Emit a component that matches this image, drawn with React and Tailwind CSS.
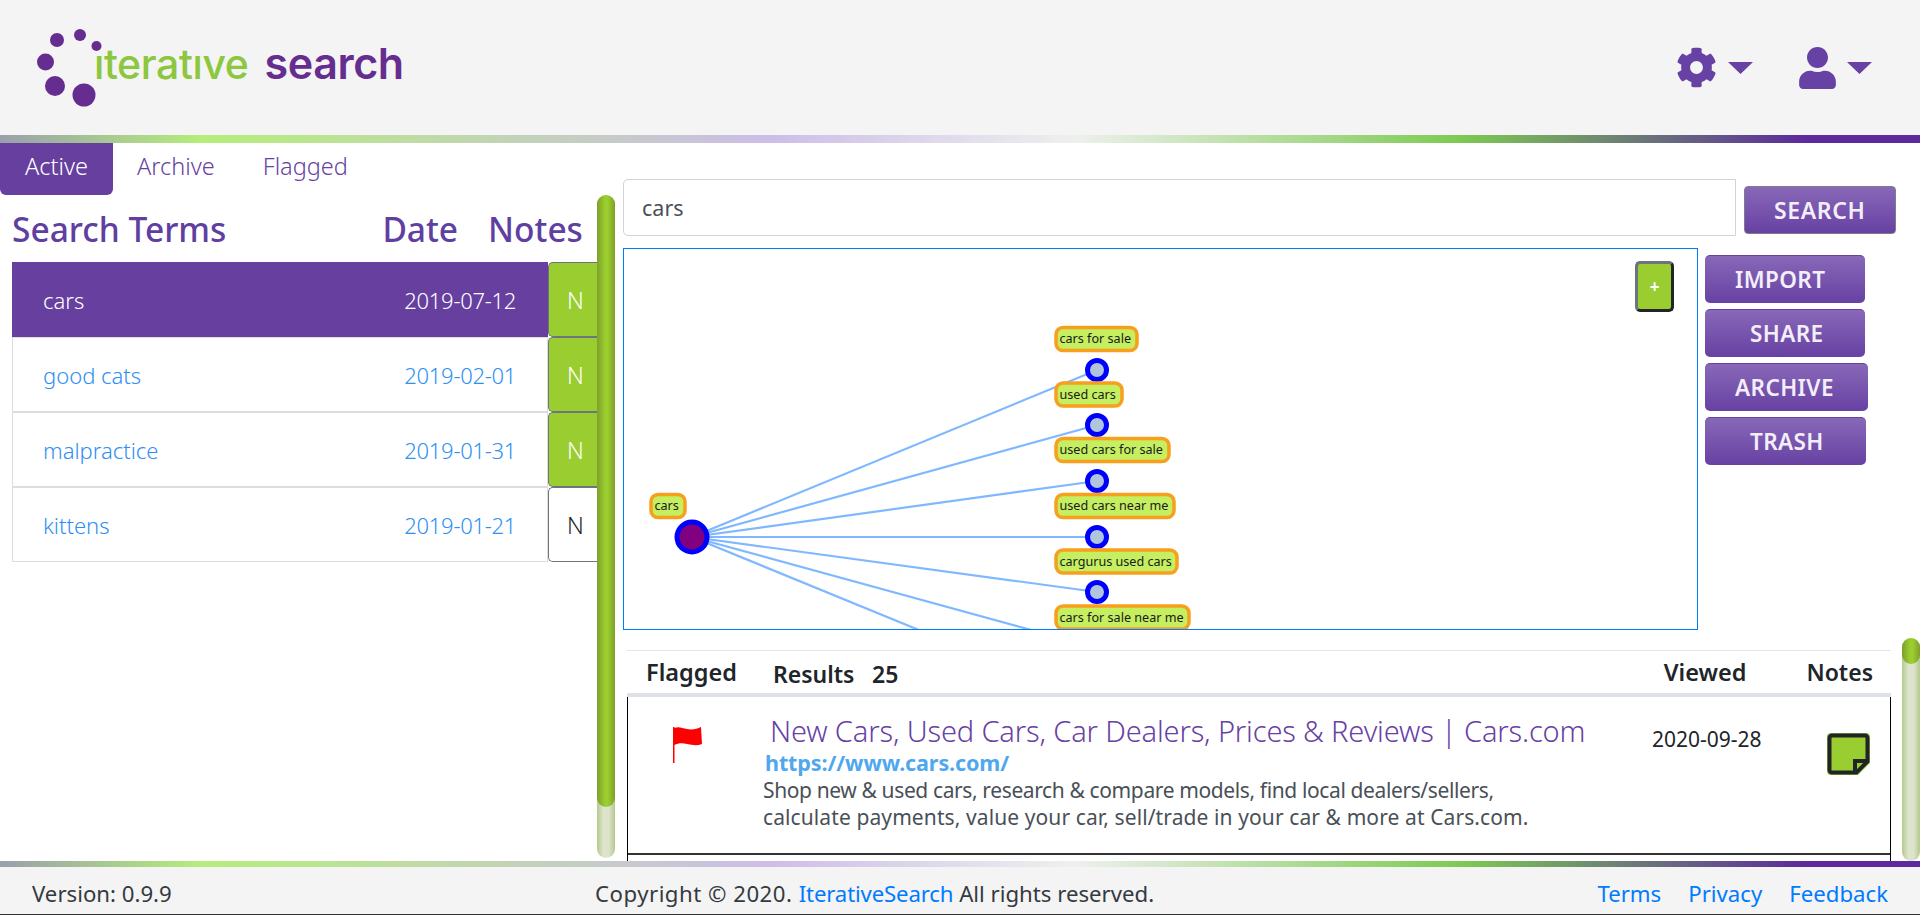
import React from "react";
import { FaCog, FaUser } from "react-icons/fa";

const rows = [
  { term: "cars", date: "2019-07-12", active: true, note: true },
  { term: "good cats", date: "2019-02-01", note: true },
  { term: "malpractice", date: "2019-01-31", note: true },
  { term: "kittens", date: "2019-01-21", note: false },
];

const labels = [
  { t: "cars for sale", x: 432, y: 78.500, w: 81 },
  { t: "used cars", x: 432, y: 134, w: 66 },
  { t: "used cars for sale", x: 432, y: 189.500, w: 113 },
  { t: "used cars near me", x: 432, y: 245.500, w: 118 },
  { t: "cargurus used cars", x: 432, y: 301, w: 121 },
  { t: "cars for sale near me", x: 432, y: 357, w: 133 },
  { t: "cars", x: 27, y: 245.500, w: 34 },
];

const kids = [121, 176, 232, 288, 343, 399, 454];

function Caret() {
  return (
    <svg width="25" height="12" viewBox="0 0 25 12" className="fill-[#6741a3]">
      <polygon points="0,0 25,0 12.5,12" />
    </svg>
  );
}

function Bar({ h }) {
  return <div className={"w-full shrink-0 bg-[linear-gradient(to_right,#9aa0ac_0%,#b5ee7a_10.6%,#cdbde8_40%,#eef0ee_56%,#7ccb50_76%,#5c2a9d_94%)] " + h} />;
}

function Scroll({ outer, thumb }) {
  return (
    <div className={"w-[18px] shrink-0 rounded-[9px] bg-[linear-gradient(to_right,#b4c98e,#dde4cc_35%,#dde4cc_65%,#b4c98e)] " + outer}>
      <div className={"w-full rounded-[9px] bg-[linear-gradient(to_right,#7f9f2a,#9acd2f_45%,#9acd2f_60%,#7f9f2a)] " + thumb} />
    </div>
  );
}

function SideBtn({ label, w, pl }) {
  return (
    <div className={"h-[48px] flex items-center pt-[1px] rounded-[5px] bg-[linear-gradient(to_bottom,#8868b8,#6741a3)] border-t border-[#6741a3] text-[#f3eefa] text-[22.500px] leading-none font-semibold tracking-[0.4px] " + w + " " + pl}>
      {label}
    </div>
  );
}

export default function App() {
  return (
    <div className="w-[1920px] h-[915px] flex flex-col overflow-hidden bg-white font-['Noto_Sans','Open_Sans',sans-serif] text-[#212529]">
      <header className="h-[135px] shrink-0 bg-[#f4f4f4] flex items-center">
        <div className="relative w-[420px] h-[135px]">
          <svg width="110" height="110" viewBox="0 0 110 110" className="absolute left-0 top-0 fill-[#662d91]">
            <circle cx="57" cy="40" r="7" />
            <circle cx="80" cy="35" r="6" />
            <circle cx="96.500" cy="46" r="5" />
            <circle cx="45.500" cy="62" r="8.500" />
            <circle cx="55" cy="86" r="10" />
            <circle cx="84" cy="95" r="11.500" />
          </svg>
          <div className="absolute left-[94px] top-[38px] text-[41px] leading-[50px] font-['Inter',sans-serif] font-medium whitespace-nowrap tracking-[-0.4px]">
            <span className="text-[#8dc63f]">ıteratıve</span>
            <span className="ml-[16px] text-[43px] text-[#662d91] font-semibold">search</span>
          </div>
        </div>
        <div className="ml-auto flex items-center text-[#6741a3]">
          <FaCog className="w-[41px] h-[41px]" />
          <div className="ml-[11px]"><Caret /></div>
          <FaUser className="ml-[46px] w-[37px] h-[42px]" />
          <div className="ml-[11px] mr-[48px]"><Caret /></div>
        </div>
      </header>
      <Bar h="h-[8px]" />

      <main className="h-[718px] shrink-0 flex overflow-hidden">
        <section className="w-[597px] shrink-0 flex flex-col">
          <nav className="h-[52px] flex items-stretch text-[23.500px] font-light text-[#6741a3]">
            <div className="w-[113px] pb-[4px] bg-[#663f9f] text-white rounded-b-[6px] flex items-center justify-center">Active</div>
            <div className="ml-[24px] pb-[4px] flex items-center">Archive</div>
            <div className="ml-[48px] pb-[4px] flex items-center">Flagged</div>
          </nav>
          <div className="h-[67px] pl-[12px] pt-[2px] flex items-center text-[33.500px] font-medium text-[#5f3f9f]">
            <span>Search Terms</span>
            <span className="ml-[156px]">Date</span>
            <span className="ml-[30px]">Notes</span>
          </div>
          <div className="flex flex-col">
            {rows.map((r) => (
              <div key={r.term} className="h-[75px] flex items-stretch">
                <div className={"ml-[12px] w-[536px] flex items-center justify-between pl-[30px] pr-[31px] pt-[1px] text-[22px] font-light border " + (r.active ? "bg-[#663f9f] text-white border-[#663f9f]" : "bg-white text-[#2f8ff5] border-[#dddddd]")}>
                  <span>{r.term}</span>
                  <span className="tracking-[-0.3px]">{r.date}</span>
                </div>
                <div className={"flex-1 rounded-l-[5px] border border-r-0 flex items-center justify-center text-[23px] font-light pl-[5px] pt-[1px] border-[#6c757d] " + (r.note ? "bg-[#9acd2f] text-white" : "bg-white text-[#212529]")}>
                  N
                </div>
              </div>
            ))}
          </div>
        </section>

        <Scroll outer="mt-[52px] h-[663px]" thumb="h-[612px]" />

        <section className="w-[1287px] shrink-0 pl-[8px] pt-[36px] flex flex-col">
          <div className="flex items-end h-[57px]">
            <div className="w-[1113px] h-[57px] pt-[1px] rounded-l-[5px] border border-[#ced4da] flex items-center pl-[18px] text-[21.500px] text-[#495057]">cars</div>
            <div className="ml-[8px] w-[152px] h-[48px] mb-[2px] flex items-center pl-[29px] rounded-[4px] border border-[#7c7c8c] bg-[linear-gradient(to_bottom,#8868b8,#6741a3)] text-[#f3eefa] text-[23px] leading-none font-semibold tracking-[0.6px]">SEARCH</div>
          </div>

          <div className="mt-[12px] flex items-start">
            <div className="relative w-[1075px] h-[382px] border border-[#007bff] overflow-hidden">
              <svg width="1073" height="380" viewBox="0 0 1073 380" className="block">
                <g stroke="#7fb8ff" strokeWidth="2.200" fill="none">
                  {kids.map((y) => (
                    <line key={y} x1="68" y1="288" x2="473" y2={y} />
                  ))}
                </g>
                <circle cx="68" cy="288" r="15" fill="#800080" stroke="#0000ff" strokeWidth="5" />
                {kids.slice(0, 5).map((y) => (
                  <circle key={y} cx="473" cy={y} r="9.500" fill="#b0c4de" stroke="#0000ff" strokeWidth="5" />
                ))}
                {labels.map((l) => (
                  <g key={l.t}>
                    <rect x={l.x} y={l.y} width={l.w} height="23" rx="7" fill="#c5ee60" stroke="#f7a01d" strokeWidth="3.500" />
                    <text x={l.x + 3.500} y={l.y + 15.500} fontSize="12.600" fill="#1a1a1a" fontFamily="'Noto Sans', sans-serif">{l.t}</text>
                  </g>
                ))}
              </svg>
              <div className="absolute left-[1011px] top-[12px] w-[39px] h-[51px] rounded-[5px] border-[3px] border-t-[#6c757d] border-l-[#6c757d] border-r-[#212529] border-b-[#212529] bg-[#9acd2f] text-white font-bold text-[17px] flex items-center justify-center">+</div>
            </div>
            <div className="ml-[7px] mt-[7px] flex flex-col gap-[6px]">
              <SideBtn label="IMPORT" w="w-[160px]" pl="pl-[30px]" />
              <SideBtn label="SHARE" w="w-[160px]" pl="pl-[45px]" />
              <SideBtn label="ARCHIVE" w="w-[163px]" pl="pl-[30px]" />
              <SideBtn label="TRASH" w="w-[161px]" pl="pl-[45px]" />
            </div>
          </div>

          <div className="ml-[4px] mt-[20px] w-[1264px] flex flex-col">
            <div className="h-[47px] pt-[5px] border-t border-b-4 border-t-[#e1e4ea] border-b-[#dee2e6] flex items-center font-semibold text-[23px] text-[#212529]">
              <span className="ml-[19px] w-[127px] -mt-[4px] text-[23.500px]">Flagged</span>
              <span className="w-[99px]">Results</span>
              <span>25</span>
              <span className="ml-auto -mt-[4px] text-[23.500px]">Viewed</span>
              <span className="ml-[60px] mr-[18px] -mt-[4px]">Notes</span>
            </div>
            <div className="h-[165px] border-l border-r border-black">
              <div className="h-[158px] border-b-2 border-[#333333] flex items-start">
                <div className="w-[137px] shrink-0 pl-[45px] pt-[30px]">
                  <svg width="30" height="37" viewBox="0 0 30 37" className="fill-[#ff0000]">
                    <rect x="0" y="0" width="1.500" height="36" />
                    <path d="M1 1 C6 -1 9 1 14 2 C19 3 24 2 28 0 L29 17 C24 19 19 18 14 17 C9 16 6 16 1 18 Z" />
                  </svg>
                </div>
                <div className="w-[887px] shrink-0 pt-[15px]">
                  <div className="pl-[5px] text-[29px] leading-[38px] font-light text-[#6741a3] whitespace-nowrap tracking-[-0.15px]">New Cars, Used Cars, Car Dealers, Prices &amp; Reviews | Cars.com</div>
                  <div className="text-[21.500px] leading-[25px] font-bold text-[#4fa8ee] tracking-[-0.1px]">https://www.cars.com/</div>
                  <div className="mt-[2px] -ml-[2px] text-[21px] leading-[27px] text-[#495057]">
                    <div className="whitespace-nowrap tracking-[-0.38px]">Shop new &amp; used cars, research &amp; compare models, find local dealers/sellers,</div>
                    <div className="whitespace-nowrap tracking-[0.1px]">calculate payments, value your car, sell/trade in your car &amp; more at Cars.com.</div>
                  </div>
                </div>
                <div className="w-[175px] shrink-0 pt-[28px] text-[21px] leading-[28px] whitespace-nowrap">2020-09-28</div>
                <div className="pt-[36px]">
                  <svg width="43" height="42" viewBox="0 0 43 42">
                    <path d="M4 0 H39 A4 4 0 0 1 43 4 V30 L31 42 H4 A4 4 0 0 1 0 38 V4 A4 4 0 0 1 4 0 Z" fill="#9acd2f" />
                    <path d="M5 2.500 H38 A2.500 2.500 0 0 1 40.500 5 V28.500 L29.500 39.500 H5 A2.500 2.500 0 0 1 2.500 37 V5 A2.500 2.500 0 0 1 5 2.500 Z" fill="#9acd2f" stroke="#212529" strokeWidth="4" />
                    <path d="M40 28 H28 V40" fill="none" stroke="#212529" strokeWidth="4" />
                  </svg>
                </div>
              </div>
            </div>
          </div>
        </section>

        <Scroll outer="mt-[495px] h-[223px]" thumb="h-[26px]" />
      </main>

      <Bar h="h-[6px]" />
      <footer className="flex-1 pt-[6px] bg-[#f4f4f4] border-b border-[#333333] flex items-center text-[22.200px] text-[#343a40]">
        <span className="ml-[32px] w-[563px]">Version: 0.9.9</span>
        <span>
          <span className="tracking-[0.5px]">Copyright © 2020. </span>
          <span className="text-[#007bff] tracking-[-0.15px]">IterativeSearch</span> All rights reserved.
        </span>
        <span className="ml-auto text-[#007bff]">Terms</span>
        <span className="ml-[27px] text-[#007bff]">Privacy</span>
        <span className="ml-[27px] mr-[32px] text-[#007bff]">Feedback</span>
      </footer>
    </div>
  );
}
